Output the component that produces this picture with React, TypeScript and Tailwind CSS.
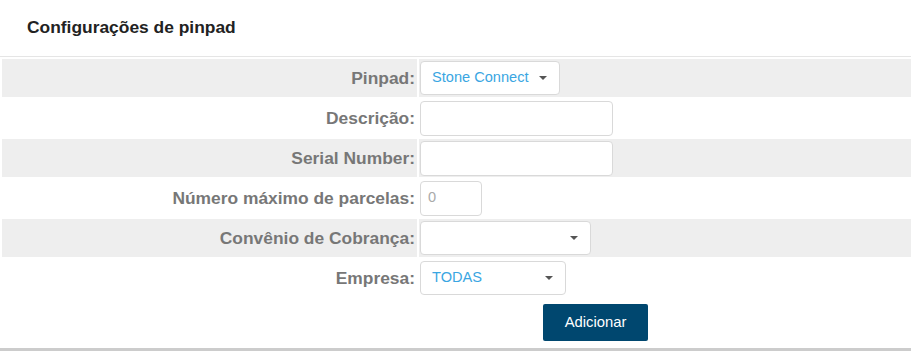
import React from "react";

const Caret = () => (
  <span className="ml-auto inline-block w-0 h-0 border-l-[4px] border-r-[4px] border-t-[4px] border-l-transparent border-r-transparent border-t-[#555]" />
);

function Row({ label, gray, children }: { label: string; gray?: boolean; children: React.ReactNode }) {
  const bg = gray ? "bg-[#eeeeee]" : "bg-white";
  return (
    <>
      <div className={`${bg} h-[38px] flex items-center justify-end pr-[2px] text-[17.4px] font-bold text-[#777]`}>{label}</div>
      <div className={`${bg} h-[38px] flex items-center pl-[1px]`}>{children}</div>
    </>
  );
}

function Select({ w, value }: { w: string; value?: string }) {
  return (
    <div className={`${w} h-[34px] bg-white border border-[#d9d9d9] rounded-[4px] flex items-center pl-[11px] pr-[12px] text-[14.6px] text-[#3aa6e2]`}>
      <span>{value}</span>
      <Caret />
    </div>
  );
}

function Input({ w, placeholder }: { w: string; placeholder?: string }) {
  return (
    <div className={`${w} h-[35px] bg-white border border-[#d9d9d9] rounded-[4px] flex items-center pl-[7px] text-[14.6px] text-[#aaa]`}>
      {placeholder}
    </div>
  );
}

export default function App() {
  return (
    <div className="w-[911px] h-[351px] bg-white overflow-hidden" style={{ fontFamily: '"Liberation Sans", Arial, sans-serif' }}>
      <div className="h-[57px] border-b border-[#e5e5e5] flex items-center pl-[27px] pb-[1px] text-[17.4px] font-bold text-[#222]">
        Configurações de pinpad
      </div>
      <div className="grid grid-cols-[415px_1fr] gap-[2px] pl-[2px] pt-[2px]">
        <Row label="Pinpad:" gray>
          <Select w="w-[140px]" value="Stone Connect" />
        </Row>
        <Row label="Descrição:">
          <Input w="w-[193px]" />
        </Row>
        <Row label="Serial Number:" gray>
          <Input w="w-[193px]" />
        </Row>
        <Row label="Número máximo de parcelas:">
          <Input w="w-[62px]" placeholder="0" />
        </Row>
        <Row label="Convênio de Cobrança:" gray>
          <Select w="w-[171px]" />
        </Row>
        <Row label="Empresa:">
          <Select w="w-[146px]" value="TODAS" />
        </Row>
      </div>
      <div className="pl-[543px] pt-[7px] h-[54px] border-b-[3px] border-[#cccccc]">
        <button className="w-[105px] h-[37px] bg-[#00476f] rounded-[2px] text-white text-[14.8px]">Adicionar</button>
      </div>
    </div>
  );
}
